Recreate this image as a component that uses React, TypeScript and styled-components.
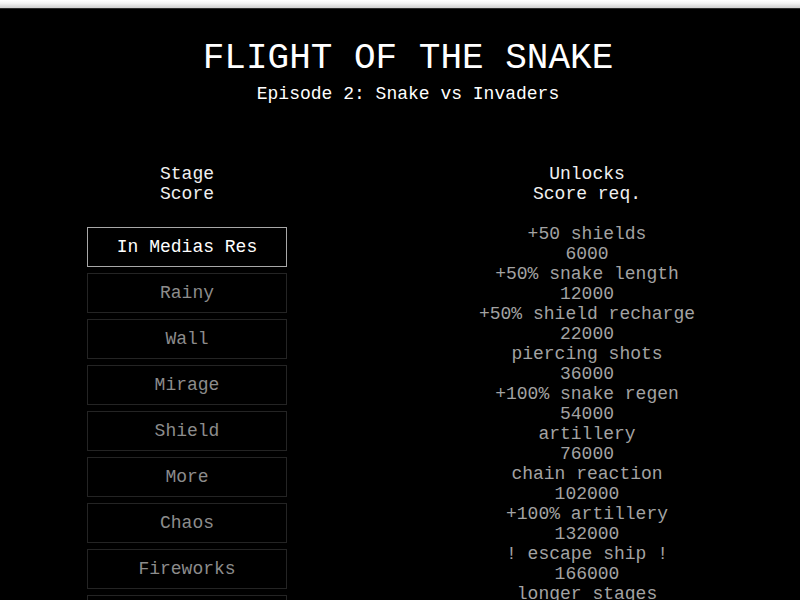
import React from "react";
import styled, { createGlobalStyle } from "styled-components";

const GlobalStyle = createGlobalStyle`
  html, body {
    margin: 0;
    padding: 0;
    height: 100%;
    overflow: hidden;
    background: #000;
  }
  body {
    font-family: "Liberation Mono", "DejaVu Sans Mono", monospace;
  }
`;

const Page = styled.div`
  width: 800px;
  height: 600px;
  display: flex;
  flex-direction: column;
  background: #000;
`;

const TopStrip = styled.div`
  height: 8px;
  flex-shrink: 0;
  background: linear-gradient(#ffffff, #f4f4f4 40%, #cfcfcf);
`;

const Screen = styled.main`
  flex: 1;
  background: #000;
  border-top: 1px solid #2c2c2c;
  color: #fff;
`;

const Header = styled.header`
  padding-left: 16px;
  padding-top: 29px;
  text-align: center;
`;

const Title = styled.h1`
  margin: 0;
  font-size: 36px;
  font-weight: normal;
  line-height: 41px;
  color: #fff;
`;

const Subtitle = styled.h2`
  margin: 5px 0 0;
  font-size: 18px;
  font-weight: normal;
  line-height: 20px;
  color: #fff;
`;

const Columns = styled.div`
  display: flex;
  gap: 100px;
  padding-left: 87px;
  margin-top: 60px;
`;

const Column = styled.section<{ $width: number }>`
  width: ${(p) => p.$width}px;
  display: flex;
  flex-direction: column;
  align-items: stretch;
`;

const ColumnHead = styled.div`
  font-size: 18px;
  line-height: 20px;
  text-align: center;
  color: #f0f0f0;
  white-space: pre-line;
`;

const StageList = styled.div`
  display: flex;
  flex-direction: column;
  gap: 6px;
  margin-top: 23px;
`;

const StageButton = styled.button<{ $active?: boolean }>`
  width: 200px;
  height: 40px;
  padding: 0;
  font-family: inherit;
  font-size: 18px;
  background: #000;
  color: ${(p) => (p.$active ? "#ffffff" : "#8c8c8c")};
  border: 1px solid ${(p) => (p.$active ? "#a8a8a8" : "#242424")};
  cursor: pointer;
  flex-shrink: 0;

  &:focus {
    outline: none;
  }
`;

const UnlockList = styled.ul`
  list-style: none;
  margin: 20px 0 0;
  padding: 0;
  text-align: center;
`;

const UnlockLine = styled.li`
  font-size: 18px;
  line-height: 20px;
  color: #a3a3a3;
  white-space: pre;
`;

const stages = [
  "In Medias Res",
  "Rainy",
  "Wall",
  "Mirage",
  "Shield",
  "More",
  "Chaos",
  "Fireworks",
  "Finale",
];

const unlocks: [string, string][] = [
  ["+50 shields", "6000"],
  ["+50% snake length", "12000"],
  ["+50% shield recharge", "22000"],
  ["piercing shots", "36000"],
  ["+100% snake regen", "54000"],
  ["artillery", "76000"],
  ["chain reaction", "102000"],
  ["+100% artillery", "132000"],
  ["! escape ship !", "166000"],
  ["longer stages", "210000"],
];

const App: React.FC = () => {
  return (
    <Page>
      <GlobalStyle />
      <TopStrip />
      <Screen>
        <Header>
          <Title>FLIGHT OF THE SNAKE</Title>
          <Subtitle>Episode 2: Snake vs Invaders</Subtitle>
        </Header>
        <Columns>
          <Column $width={200}>
            <ColumnHead>{"Stage\nScore"}</ColumnHead>
            <StageList>
              {stages.map((name, i) => (
                <StageButton key={name} type="button" $active={i === 0}>
                  {name}
                </StageButton>
              ))}
            </StageList>
          </Column>
          <Column $width={400}>
            <ColumnHead>{"Unlocks\nScore req."}</ColumnHead>
            <UnlockList>
              {unlocks.map(([label, score]) => (
                <React.Fragment key={label}>
                  <UnlockLine>{label}</UnlockLine>
                  <UnlockLine>{score}</UnlockLine>
                </React.Fragment>
              ))}
            </UnlockList>
          </Column>
        </Columns>
      </Screen>
    </Page>
  );
};

export default App;
